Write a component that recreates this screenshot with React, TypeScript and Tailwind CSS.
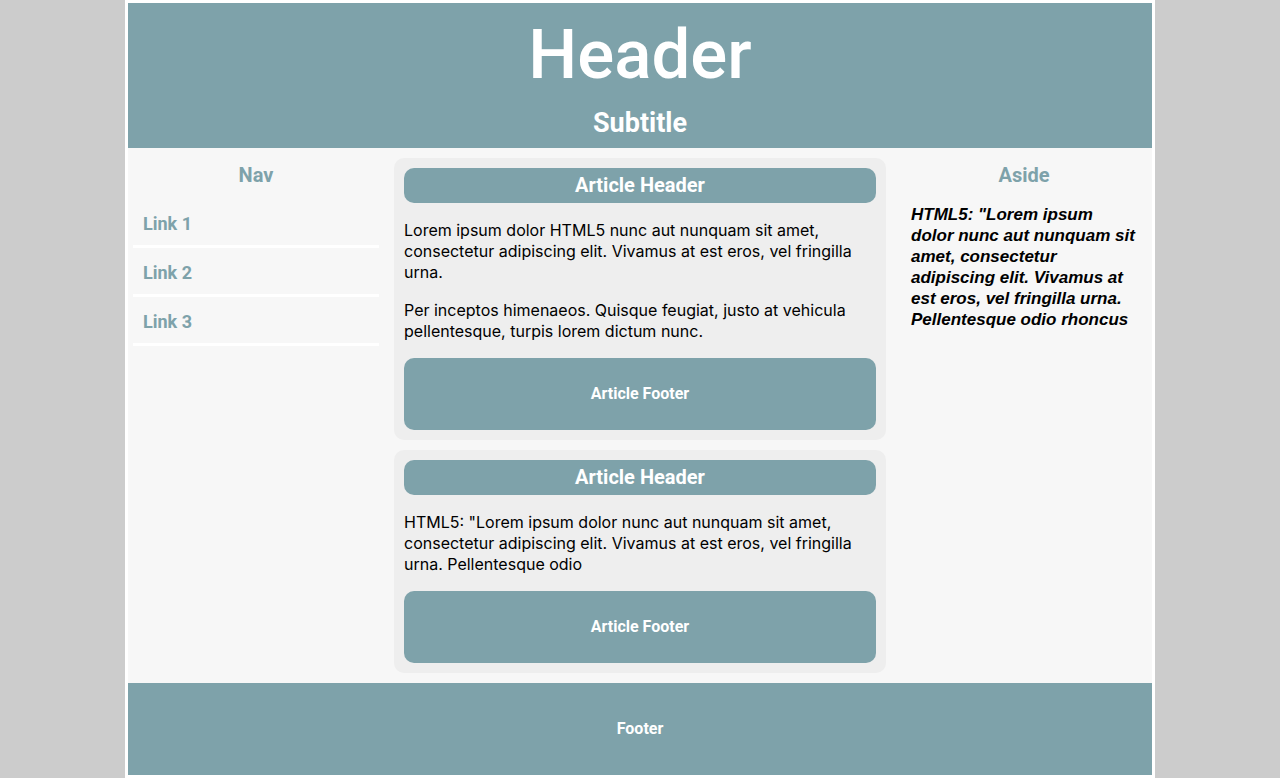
import type { ReactNode } from "react";

const links = ["Link 1", "Link 2", "Link 3"];

function Article({ children }: { children: ReactNode }) {
  return (
    <article className="rounded-[10px] bg-[#eeeeee] p-2.5">
      <header className="rounded-[10px] bg-[#7ea2aa] py-1 text-center text-white">
        <h2 className="text-xl leading-[27px] font-bold">Article Header</h2>
      </header>
      <div className="mt-[17px] mb-4 flex flex-col gap-[17px] font-['Inter',sans-serif] text-base leading-[21px]">
        {children}
      </div>
      <footer className="rounded-[10px] bg-[#7ea2aa] py-6 text-center text-white">
        <h3 className="text-base leading-6 font-bold">Article Footer</h3>
      </footer>
    </article>
  );
}

export default function App() {
  return (
    <div className="min-h-screen bg-[#cccccc] font-['Roboto',sans-serif] text-black">
      <div className="mx-auto box-content w-4/5 border-[3px] border-white bg-[#f7f7f7]">
        <header className="bg-[#7ea2aa] pt-2.5 pb-2 text-center text-white">
          <h1 className="text-[69px] leading-[84px] font-medium">Header</h1>
          <h2 className="pt-2.5 text-[27px] leading-[33px] font-bold">Subtitle</h2>
        </header>
        <div className="grid grid-cols-4">
          <nav className="px-[5px] pt-[15px] text-[#7ea2aa]">
            <h2 className="text-center text-xl leading-6 font-bold">Nav</h2>
            <ul className="pt-3">
              {links.map((label) => (
                <li key={label} className="border-b-[3px] border-white">
                  <a href="#" className="block px-2.5 pt-3.5 pb-2.5 text-lg leading-[22px] font-bold">
                    {label}
                  </a>
                </li>
              ))}
            </ul>
          </nav>
          <main className="col-span-2 flex flex-col gap-2.5 p-2.5">
            <Article>
              <p>
                Lorem ipsum dolor HTML5 nunc aut nunquam sit amet, consectetur adipiscing elit. Vivamus at est eros, vel
                fringilla urna.
              </p>
              <p>
                Per inceptos himenaeos. Quisque feugiat, justo at vehicula pellentesque, turpis lorem dictum nunc.
              </p>
            </Article>
            <Article>
              <p>
                HTML5: "Lorem ipsum dolor nunc aut nunquam sit amet, consectetur adipiscing elit. Vivamus at est eros,
                vel fringilla urna. Pellentesque odio
              </p>
            </Article>
          </main>
          <aside className="px-[15px] pt-[15px]">
            <h2 className="text-center text-xl leading-6 font-bold text-[#7ea2aa]">Aside</h2>
            <p className="pt-[17px] font-['Liberation_Sans',sans-serif] text-[17px] leading-[21px] font-bold italic">
              HTML5: "Lorem ipsum dolor nunc aut nunquam sit amet, consectetur adipiscing elit. Vivamus at est eros, vel
              fringilla urna. Pellentesque odio rhoncus
            </p>
          </aside>
        </div>
        <footer className="bg-[#7ea2aa] py-[34px] text-center text-white">
          <h3 className="text-base leading-6 font-bold">Footer</h3>
        </footer>
      </div>
    </div>
  );
}
